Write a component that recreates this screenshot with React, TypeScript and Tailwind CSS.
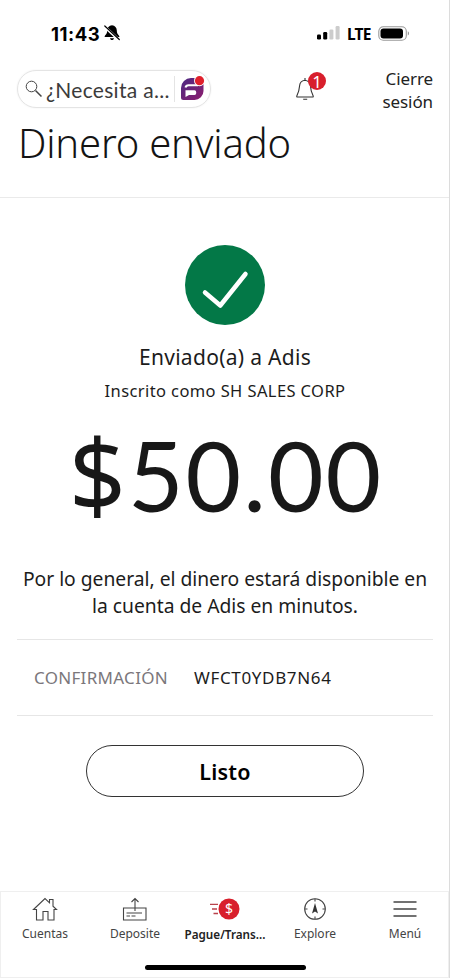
import type { ReactNode } from 'react';
import clsx from 'clsx';

function StatusBar() {
  return (
    <div className="flex h-[70px] items-start pt-[23px] pl-[51px] text-black">
      <span className="w-[50px] whitespace-nowrap font-['Inter'] text-[18.500px] leading-[22px] font-bold tracking-[0.500px]">
        11:43
      </span>
      <svg width="18" height="18" viewBox="0 0 18 18" className="mt-[1px] ml-[2px]" aria-hidden="true">
        <path d="M9 1.200c-3 .3-4.800 2.500-4.800 5.300 0 3.300-1.500 4-2.500 5.700-.2.500 0 .9.600.9h13.400c.6 0 .8-.4.600-.9-1-1.700-2.500-2.400-2.500-5.700C13.800 3.700 12 1.500 9 1.200zM7 14.200h4c-.2 1.200-1 1.800-2 1.800s-1.800-.6-2-1.800z" fill="#000" />
        <path d="M1.500 2.500 16 16" stroke="#fff" strokeWidth="3" />
        <path d="M1.800 2 16.300 15.500" stroke="#000" strokeWidth="1.200" strokeLinecap="round" />
      </svg>
      <svg width="24" height="16" viewBox="0 0 24 16" className="mt-[2px] ml-[196px]" aria-hidden="true">
        <rect x="0" y="9.500" width="4" height="5" rx="1.200" fill="#000" />
        <rect x="6.200" y="7" width="4" height="7.500" rx="1.200" fill="#000" />
        <rect x="12.400" y="4.500" width="4" height="10" rx="1.200" fill="#ccc" />
        <rect x="18.600" y="1" width="4" height="13.500" rx="1.200" fill="#ccc" />
      </svg>
      <span className="ml-[6px] w-[24px] whitespace-nowrap font-['Noto_Sans'] text-[15.500px] leading-[22px] font-bold tracking-[-0.800px]">
        LTE
      </span>
      <svg width="32" height="15" viewBox="0 0 32 15" className="mt-[3px] ml-[7px]" aria-hidden="true">
        <rect x="0.800" y="0.700" width="27.500" height="13.500" rx="4.500" fill="none" stroke="#999" strokeWidth="1.100" />
        <rect x="2.500" y="2.400" width="22.500" height="10" rx="3" fill="#000" />
        <path d="M29.800 5.300c1.500.7 1.500 3.500 0 4.300z" fill="#888" />
      </svg>
    </div>
  );
}

function SearchBar() {
  return (
    <div className="flex h-[38px] w-[194px] items-center rounded-full border border-[#e4e4e4] pl-[7px] shadow-[0_0_2px_#eee]">
      <svg width="18" height="18" viewBox="0 0 18 18" fill="none" stroke="#444" aria-hidden="true">
        <circle cx="6.500" cy="6.500" r="5.300" />
        <path d="m10.500 10.500 6 6" strokeWidth="1.500" />
      </svg>
      <span className="mt-[2px] ml-[3px] w-[128px] whitespace-nowrap font-['Lato'] text-[21px] leading-[26px] tracking-[0.300px] text-[#3b3b3b]">
        ¿Necesita a...
      </span>
      <span className="h-[26px] w-px bg-[#e4e4e4]" />
      <svg width="26" height="28" viewBox="0 0 26 28" className="ml-[5px]" aria-hidden="true">
        <defs>
          <linearGradient id="assistant" x1="0" y1="0" x2="1" y2="1">
            <stop offset="0" stopColor="#4b2a83" />
            <stop offset="1" stopColor="#8d1d6e" />
          </linearGradient>
        </defs>
        <path d="M11 3h12.500v13a9 9 0 0 1-9 9H3.500A2.500 2.500 0 0 1 1 22.500V13A10 10 0 0 1 11 3z" fill="url(#assistant)" />
        <path d="M18 10.200H8.500c-1.500 0-2.700 1-3 2.300" fill="none" stroke="#fff" strokeWidth="2" />
        <path d="M5.500 15.300h9a1.700 1.700 0 0 1 1.700 1.700v1.300a1.700 1.700 0 0 1-1.700 1.700H9l-3.500 2z" fill="#fff" />
        <circle cx="19.500" cy="5.700" r="5.500" fill="#fff" />
        <circle cx="19.500" cy="5.700" r="4.600" fill="#e0202b" />
      </svg>
    </div>
  );
}

function Header() {
  return (
    <header className="h-[128px] border-b border-[#eaeaea] pr-[16px] pl-[17px]">
      <div className="flex h-[48px] items-start">
        <SearchBar />
        <div className="relative ml-[84px] w-[36px]">
          <svg width="22" height="24" viewBox="0 0 22 24" className="mt-[7px]" fill="none" stroke="#333" strokeWidth="1.100" aria-hidden="true">
            <path d="M9.800 3.200c-3.300.5-5 2.500-5.200 5.600-.3 4.700-1.200 7-2.800 10.300-.2.500 0 .9.500.9h15.400c.5 0 .7-.4.500-.9-1.600-3.300-2.500-5.600-2.800-10.300-.2-3.100-2-5.100-5.600-5.600zM8.200 22.200h4M10 1v2" />
          </svg>
          <span className="absolute top-[2px] left-[13px] flex h-[18px] w-[18px] items-center justify-center rounded-full bg-[#d81f2c] font-['Noto_Sans'] text-[17px] leading-none text-white">
            1
          </span>
        </div>
        <a className="mt-[-3px] ml-auto w-[70px] text-right text-[17px] leading-[23px] tracking-[-0.100px] text-[#222]">
          Cierre sesión
        </a>
      </div>
      <h1 className="mt-[-1px] ml-[1px] whitespace-nowrap text-[40px] leading-[52px] font-light tracking-[-0.200px] text-[#141414]">
        Dinero enviado
      </h1>
    </header>
  );
}

interface NavItemProps {
  label: string;
  active?: boolean;
  children: ReactNode;
}

function NavItem({ label, active, children }: NavItemProps) {
  return (
    <a className="flex w-[90px] shrink-0 flex-col items-center pt-[3px]">
      <svg width="36" height="28" viewBox="0 0 36 28" fill="none" stroke="#444" strokeWidth="1.100" aria-hidden="true">
        {children}
      </svg>
      <span
        className={clsx(
          'mt-[2px] whitespace-nowrap leading-[18px]',
          active ? 'text-[11.700px] font-semibold text-[#222]' : 'text-[12px] text-[#444]'
        )}
      >
        {label}
      </span>
    </a>
  );
}

function BottomNav() {
  return (
    <nav className="flex h-[87px] flex-col border border-[#efefef]">
      <div className="-mx-px flex h-[70px]">
        <NavItem label="Cuentas">
          <path d="M6.500 14.500 18 3.500l4.500 4.300V4.500h3.500v6.700l3.500 3.300H27V25h-6v-8.500h-5V25h-6.500V14.500z" />
        </NavItem>
        <NavItem label="Deposite">
          <path d="M6.500 13h22.500v12H6.500zM18 16V3.500M14.500 7 18 3.500 21.500 7M9.500 18h15.500M9.500 21h3.500M14.500 21h4" />
        </NavItem>
        <NavItem label="Pague/Trans..." active>
          <path d="M3 9.300h8M5 14h5M6.500 18.500H11" stroke="#b8434c" strokeWidth="1.300" />
          <circle cx="22" cy="14" r="10.500" fill="#d81f2c" stroke="none" />
          <text x="22" y="19" textAnchor="middle" fontSize="14" fill="#fff" stroke="none">$</text>
        </NavItem>
        <NavItem label="Explore">
          <circle cx="18" cy="14" r="10.300" />
          <path d="M18 3.700v2.800M18 21.500v2.800M7.700 14h2.800M25.500 14h2.800" />
          <path d="m18 8-3 10.500 3-2 3 2z" fill="#333" stroke="none" />
        </NavItem>
        <NavItem label="Menú">
          <path d="M6.500 7h23M6.500 14h23M6.500 21h23" strokeWidth="1.300" />
        </NavItem>
      </div>
      <div className="mt-[3px] ml-[144px] h-[5px] w-[161px] rounded-full bg-black" />
    </nav>
  );
}

export default function App() {
  return (
    <div className="flex h-[978px] w-[450px] flex-col overflow-hidden border-r border-[#dcdcdc] bg-white font-['Noto_Sans',sans-serif]">
      <StatusBar />
      <Header />

      <main className="flex flex-1 flex-col items-center pr-[16px] pl-[17px] pt-[47px] text-center text-[#1c1c1c]">
        <svg width="80" height="80" viewBox="0 0 80 80" aria-hidden="true">
          <circle cx="40" cy="40" r="40" fill="#037847" />
          <path d="M20 47.500 35.300 60.500 60.500 29" fill="none" stroke="#fff" strokeWidth="4.500" strokeLinecap="round" strokeLinejoin="round" />
        </svg>
        <h2 className="mt-[18px] text-[21px] leading-[28px] tracking-[0.300px] whitespace-nowrap">Enviado(a) a Adis</h2>
        <p className="mt-[9px] text-[16.500px] leading-[22px] tracking-[0.400px] whitespace-nowrap">Inscrito como SH SALES CORP</p>
        <p className="mt-[16px] flex h-[110px] items-baseline pl-[2px] font-['Lato'] text-[96px] leading-[110px] tracking-[2px] whitespace-nowrap text-[#181818]">
          <span className="font-['Noto_Sans'] text-[100px]">$</span>
          <span>50.00</span>
        </p>
        <p className="mt-[37px] w-[416px] text-[19.300px] leading-[27px] tracking-[-0.020px] whitespace-nowrap">
          Por lo general, el dinero estará disponible en
          <br />
          la cuenta de Adis en minutos.
        </p>

        <dl className="mt-[20px] flex h-[77px] w-full items-center border-y border-[#e6e6e6] pl-[17px] text-[17px]">
          <dt className="w-[160px] text-left tracking-[0.300px] whitespace-nowrap text-[#7b777b]">CONFIRMACIÓN</dt>
          <dd className="tracking-[0.650px] whitespace-nowrap">WFCT0YDB7N64</dd>
        </dl>

        <button className="mt-[29px] h-[52px] w-[278px] rounded-full border border-[#333] pt-[2px] text-[21.500px] font-semibold tracking-[0.200px] text-black">
          Listo
        </button>
      </main>

      <BottomNav />
    </div>
  );
}
